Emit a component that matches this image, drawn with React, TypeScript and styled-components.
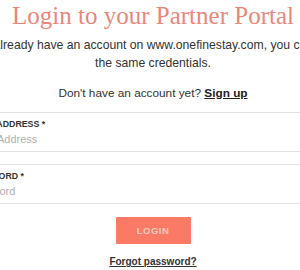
import React from 'react'
import styled, { createGlobalStyle } from 'styled-components'

const GlobalStyle = createGlobalStyle`
    html, body {
        margin: 0;
        padding: 0;
        background: #ffffff;
        overflow: hidden;
    }
    body {
        font-family: "Liberation Sans", Arial, sans-serif;
        color: #333333;
    }
`;

export default function App() {
    return (
        <>
            <GlobalStyle />
            <Page>
                <Title>Login to your Partner Portal</Title>
                <Intro>
                    If you already have an account on www.onefinestay.com, you can log in
                    <br />
                    the same credentials.
                </Intro>
                <SignUpLine>
                    Don't have an account yet? <TextLink href='#'>Sign up</TextLink>
                </SignUpLine>
                <Form>
                    <Field>
                        <FieldLabel>Email Address *</FieldLabel>
                        <FieldInput type='email' placeholder='Email Address' />
                    </Field>
                    <Field>
                        <FieldLabel>Password *</FieldLabel>
                        <FieldInput type='password' placeholder='Password' />
                    </Field>
                    <LoginButton type='button'>Login</LoginButton>
                </Form>
                <Forgot href='#'>Forgot password?</Forgot>
            </Page>
        </>
    );
}

const Page = styled.div`
    width: 398px;
    margin-left: -46px;
    display: flex;
    flex-direction: column;
    align-items: center;
`;

const Title = styled.h1`
    margin: 0;
    font-family: "Liberation Serif", "DejaVu Serif", serif;
    font-weight: 400;
    font-size: 25px;
    line-height: 32px;
    color: #e9877a;
    white-space: nowrap;
`;

const Intro = styled.p`
    margin: 4px 0 0;
    font-size: 12.2px;
    line-height: 18px;
    text-align: center;
    white-space: nowrap;
`;

const SignUpLine = styled.p`
    margin: 12px 0 0;
    font-size: 11.8px;
    line-height: 18px;
    text-align: center;
`;

const TextLink = styled.a`
    color: #222222;
    font-weight: 700;
    text-decoration: underline;
`;

const Form = styled.form`
    align-self: stretch;
    margin-top: 10px;
    display: flex;
    flex-direction: column;
    gap: 12px;
`;

const Field = styled.label`
    height: 40px;
    box-sizing: border-box;
    border: 1px solid #e2e2e2;
    padding: 5px 12px 0;
    display: flex;
    flex-direction: column;
    gap: 2px;
`;

const FieldLabel = styled.span`
    font-size: 8.8px;
    line-height: 12px;
    font-weight: 700;
    text-transform: uppercase;
    color: #333333;
`;

const FieldInput = styled.input`
    border: none;
    outline: none;
    padding: 0;
    margin: 0;
    font-family: inherit;
    font-size: 11px;
    line-height: 15px;
    color: #333333;
    background: transparent;

    &::placeholder {
        color: #b0b0b0;
    }
`;

const LoginButton = styled.button`
    align-self: center;
    width: 75px;
    height: 27px;
    margin-top: 1px;
    border: none;
    border-radius: 1px;
    background: #fa7a66;
    color: rgba(255, 255, 255, 0.6);
    font-family: inherit;
    font-size: 9.5px;
    font-weight: 700;
    letter-spacing: 0.5px;
    text-transform: uppercase;
`;

const Forgot = styled.a`
    margin-top: 11px;
    font-size: 10px;
    line-height: 14px;
    font-weight: 700;
    color: #333333;
    text-decoration: underline;
`;
